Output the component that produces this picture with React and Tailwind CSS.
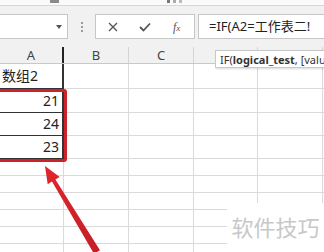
import React from 'react';

const cols = [64, 65, 65, 64, 65, 40];
const letters = ['A', 'B', 'C', '', '', ''];

const rows = [
  { h: 25, a: '数组2', left: true },
  { h: 24, a: '21', dark: true },
  { h: 23, a: '24', dark: true },
  { h: 23, a: '23', dark: true },
  { h: 17 },
  { h: 17 },
  { h: 17 },
  { h: 17 },
  { h: 17 },
  { h: 17 },
];

const Arrow = () => (
  <svg className="absolute left-0 top-0" width="324" height="252" viewBox="0 0 324 252">
    <defs>
      <linearGradient id="arrowRed" x1="0" y1="0" x2="0" y2="1">
        <stop offset="0%" stopColor="#e0252c" />
        <stop offset="100%" stopColor="#c51f27" />
      </linearGradient>
    </defs>
    <polygon
      points="45,166 59.7,177 55.4,179.6 100,250.2 94,253.8 52,181.6 47.7,184.2"
      fill="url(#arrowRed)"
    />
  </svg>
);

const App = () => {
  return (
    <div
      className="relative w-[324px] h-[252px] overflow-hidden bg-white text-[#222]"
      style={{ fontFamily: '"Noto Sans", "Noto Sans CJK SC", sans-serif' }}
    >
      {/* ribbon edge */}
      <div className="flex h-[6px] items-start border-b border-[#d6d6d6] bg-[#fafafa]">
        <div className="ml-[50px] h-[3px] w-[9px] bg-[#8a8a8a]" />
        <div className="ml-[108px] flex gap-[3px]">
          <div className="h-[3px] w-[3px] bg-[#777]" />
          <div className="h-[3px] w-[3px] bg-[#aaa]" />
          <div className="h-[3px] w-[3px] bg-[#bbb]" />
        </div>
      </div>

      {/* formula bar */}
      <div className="flex h-[41px] items-start bg-[#f1f1f1] pt-[8px]">
        <div className="relative -ml-px flex h-[25px] w-[69px] items-center justify-end border border-[#c6c6c6] bg-white pr-[5px]">
          <div className="h-0 w-0 border-x-[3px] border-t-[4px] border-x-transparent border-t-[#555]" />
        </div>
        <div className="ml-[13px] flex h-[25px] flex-col items-center justify-center gap-[2px]">
          <div className="h-[2px] w-[2px] bg-[#9a9a9a]" />
          <div className="h-[2px] w-[2px] bg-[#9a9a9a]" />
          <div className="h-[2px] w-[2px] bg-[#9a9a9a]" />
        </div>
        <div className="ml-[12px] flex h-[25px] w-[100px] items-center border border-[#c6c6c6] bg-white">
          <svg className="ml-[12px]" width="10" height="10" viewBox="0 0 10 10">
            <path d="M1 1 L9 9 M9 1 L1 9" stroke="#555" strokeWidth="1.3" fill="none" />
          </svg>
          <svg className="ml-[21px]" width="12" height="10" viewBox="0 0 12 10">
            <path d="M1 5 L4.5 8.5 L11 1.5" stroke="#555" strokeWidth="1.8" fill="none" />
          </svg>
          <span
            className="ml-[22px] text-[12px] italic leading-none text-[#555]"
            style={{ fontFamily: '"Liberation Serif", serif' }}
          >
            f<span className="text-[9px]">x</span>
          </span>
        </div>
        <div className="ml-[3px] flex h-[25px] flex-1 items-center border border-r-0 border-[#c6c6c6] bg-white pl-[10px] text-[13px] leading-none text-[#222]">
          =IF(A2=工作表二!
        </div>
      </div>

      {/* column header */}
      <div className="flex h-[17px] border-b border-[#c9c9c9] bg-[#f1f1f1] text-[13px] leading-none text-[#444]">
        {cols.map((w, i) => (
          <div
            key={i}
            className={`flex shrink-0 items-center justify-center ${i === 0 ? 'border-r-2 border-[#222]' : 'border-r border-[#d4d4d4]'}`}
            style={{ width: w }}
          >
            {letters[i]}
          </div>
        ))}
      </div>

      {/* cells */}
      {rows.map((r, ri) => (
        <div key={ri} className="flex" style={{ height: r.h }}>
          {cols.map((w, ci) => {
            const isA = ci === 0;
            const dark = isA && ri < 4;
            return (
              <div
                key={ci}
                className={`flex shrink-0 items-center text-[14px] leading-none ${
                  dark ? 'border-r-2 border-b border-[#333]' : 'border-r border-b border-[#dadada]'
                } ${r.left ? 'justify-start pl-[2px]' : 'justify-end pr-[3px]'}`}
                style={{ width: w }}
              >
                {isA ? r.a : null}
              </div>
            );
          })}
        </div>
      ))}

      {/* red highlight box */}
      <div className="absolute left-[-3px] top-[89px] h-[73px] w-[70px] rounded-[3px] border-[3px] border-[#cc2229]" />

      <Arrow />

      {/* function tooltip */}
      <div className="absolute left-[215px] top-[50px] flex h-[18px] w-[120px] items-center border border-[#c8c8c8] bg-white pl-[4px] text-[11px] leading-none text-[#333] shadow-[1px_1px_2px_rgba(0,0,0,0.15)] whitespace-nowrap">
        IF(<span className="font-bold">logical_test</span>, [valu
      </div>

      {/* watermark */}
      <div className="absolute left-[227px] top-[203px] flex h-[49px] w-[97px] items-center justify-center bg-white pb-[2px]">
        <span className="text-[22px] leading-none text-[#c8c8c8]">软件技巧</span>
      </div>
    </div>
  );
};

export default App;
